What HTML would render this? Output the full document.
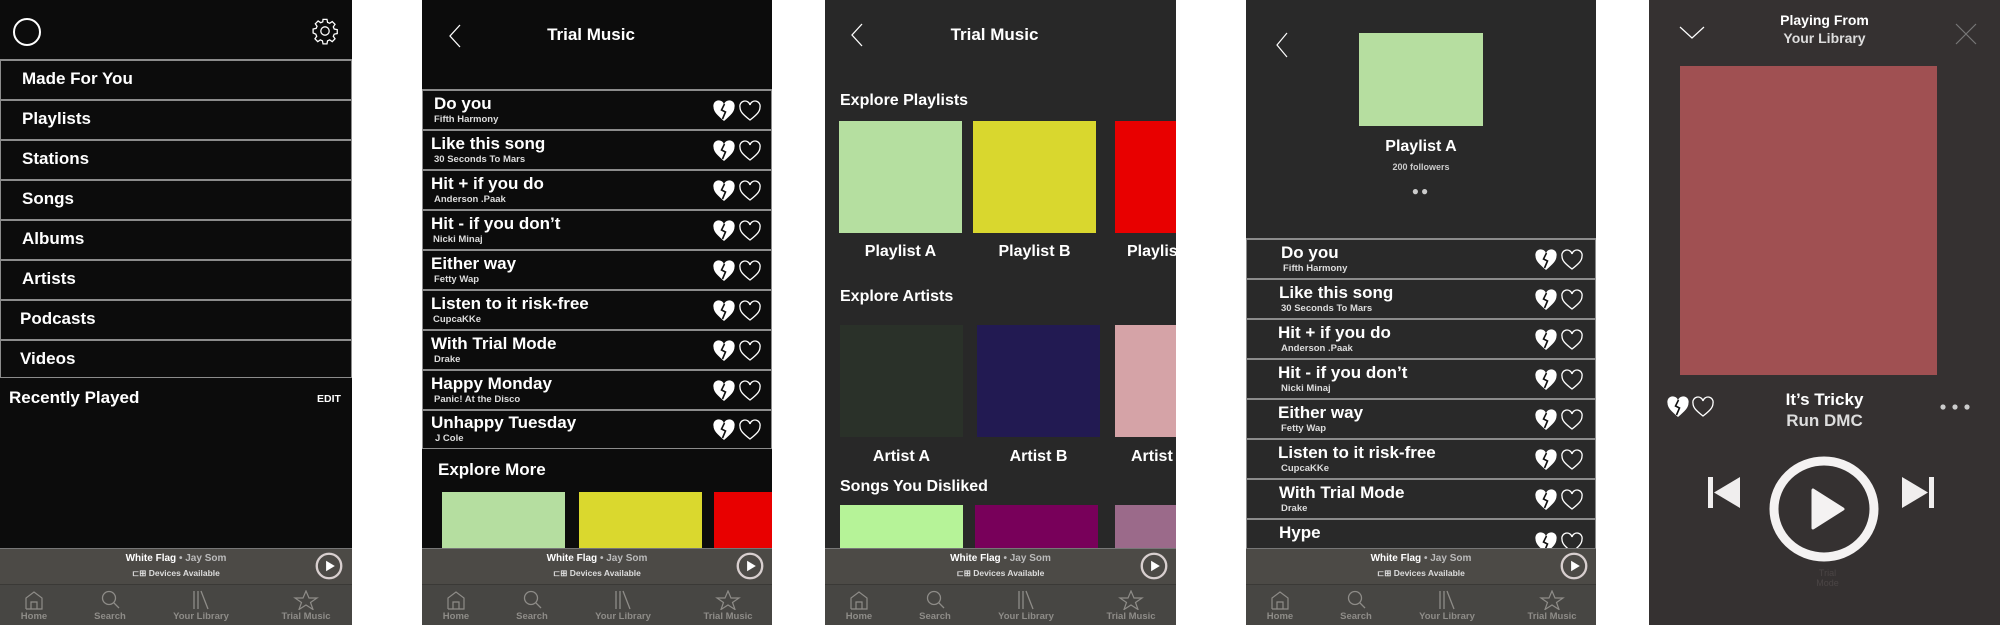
<!DOCTYPE html>
<html><head><meta charset="utf-8">
<style>
*{margin:0;padding:0;box-sizing:border-box}
body{width:2000px;height:625px;background:#fff;position:relative;overflow:hidden;font-family:"Liberation Sans",sans-serif;color:#fff}
.scr{position:absolute;top:0;height:625px;overflow:hidden}
.a{position:absolute}
.b{font-weight:bold}
.row{position:absolute;left:0;right:0;height:40px;border:1px solid #8c8c8c;border-top:2px solid #8c8c8c;border-bottom:none}
.row .t{position:absolute;top:3px;font-size:17px;font-weight:bold;white-space:nowrap}
.row .s{position:absolute;top:23px;font-size:9.5px;font-weight:bold;color:#ddd;white-space:nowrap}
.row .h{position:absolute;top:9px}
.mini{position:absolute;left:0;right:0;top:548px;height:36px;background:#4c4a46;border-top:1px solid #777}
.mini .l1{position:absolute;top:4px;left:0;right:0;text-align:center;font-size:10px;font-weight:bold}
.mini .l1 span{color:#bbb}
.mini .l2{position:absolute;top:19px;left:0;right:0;text-align:center;font-size:8.5px;font-weight:bold;color:#ddd}
.tabs{position:absolute;left:0;right:0;top:584px;height:41px;background:#474643;border-top:1px solid #3a3936}
.tab{position:absolute;top:0;width:90px;margin-left:-45px;text-align:center;color:#8e8c88;font-size:9.5px;font-weight:bold}
.tab svg{display:block;margin:5px auto 1px}
.sec{position:absolute;font-size:16px;font-weight:bold;white-space:nowrap}
.lbl{position:absolute;font-size:16px;font-weight:bold;text-align:center;white-space:nowrap}
</style></head><body>
<svg width="0" height="0" style="position:absolute">
<defs>
<symbol id="bh" viewBox="0 0 24 22"><path d="M12 21C5 15 1.5 11.5 1.5 7A5.2 5.2 0 0 1 12 4.5A5.2 5.2 0 0 1 22.5 7C22.5 11.5 19 15 12 21Z" fill="#fff"/><path d="M12.5 4L9.5 10L13.5 12L10.5 19" fill="none" stroke="#111" stroke-width="1.6"/></symbol>
<symbol id="oh" viewBox="0 0 24 22"><path d="M12 20C5 14.5 2 11.5 2 7.2A4.8 4.8 0 0 1 12 5A4.8 4.8 0 0 1 22 7.2C22 11.5 19 14.5 12 20Z" fill="none" stroke="#fff" stroke-width="1.3"/></symbol>
<symbol id="pl" viewBox="0 0 24 24"><circle cx="12" cy="12" r="10.5" fill="none" stroke="#d8cfcf" stroke-width="2"/><path d="M9.5 7.5L17 12L9.5 16.5Z" fill="#fff"/></symbol>
</defs></svg>

<!-- ===== SCREEN 1 ===== -->
<div class="scr" style="left:0;width:352px;background:#0c0c0c">
 <svg class="a" style="left:12px;top:17px" width="30" height="30"><circle cx="15" cy="15" r="13" fill="none" stroke="#fff" stroke-width="2"/></svg>
 <svg class="a" style="left:311px;top:17px" width="28" height="28" viewBox="0 0 24 24"><path d="M10.3 2h3.4l.5 2.6 1.8.8 2.2-1.5 2.4 2.4-1.5 2.2.8 1.8 2.6.5v3.4l-2.6.5-.8 1.8 1.5 2.2-2.4 2.4-2.2-1.5-1.8.8-.5 2.6h-3.4l-.5-2.6-1.8-.8-2.2 1.5-2.4-2.4 1.5-2.2-.8-1.8L1.8 13.7v-3.4l2.6-.5.8-1.8-1.5-2.2 2.4-2.4 2.2 1.5 1.8-.8z" fill="none" stroke="#fff" stroke-width="1.1"/><circle cx="12" cy="12" r="3.6" fill="none" stroke="#fff" stroke-width="1.1"/></svg>
 <div class="row" style="top:59px"><div class="t" style="left:21px;top:8px">Made For You</div></div>
 <div class="row" style="top:99px"><div class="t" style="left:21px;top:8px">Playlists</div></div>
 <div class="row" style="top:139px"><div class="t" style="left:21px;top:8px">Stations</div></div>
 <div class="row" style="top:179px"><div class="t" style="left:21px;top:8px">Songs</div></div>
 <div class="row" style="top:219px"><div class="t" style="left:21px;top:8px">Albums</div></div>
 <div class="row" style="top:259px"><div class="t" style="left:21px;top:8px">Artists</div></div>
 <div class="row" style="top:299px"><div class="t" style="left:19px;top:8px">Podcasts</div></div>
 <div class="row" style="top:339px;height:39px;border-bottom:1px solid #8c8c8c"><div class="t" style="left:19px;top:8px">Videos</div></div>
 <div class="a b" style="left:9px;top:388px;font-size:17px">Recently Played</div>
 <div class="a b" style="left:317px;top:393px;font-size:10.5px">EDIT</div>
 <div class="mini"><div class="l1">White Flag <span>• Jay Som</span></div><div class="l2">⊏⊞ Devices Available</div><svg class="a" style="left:315px;top:3px" width="28" height="28"><use href="#pl"/></svg></div>
 <div class="tabs">
  <div class="tab" style="left:34px"><svg width="22" height="20" viewBox="0 0 22 20"><path d="M3 19V8L11 2L19 8V19H3M8 19V12H14V19" fill="none" stroke="#8e8c88" stroke-width="1.2"/></svg>Home</div>
  <div class="tab" style="left:110px"><svg width="22" height="20" viewBox="0 0 22 20"><circle cx="10" cy="8" r="6.5" fill="none" stroke="#8e8c88" stroke-width="1.3"/><path d="M14.6 12.6L20 18" stroke="#8e8c88" stroke-width="1.3"/></svg>Search</div>
  <div class="tab" style="left:201px"><svg width="22" height="20" viewBox="0 0 22 20"><path d="M4 1V19M8 1V19M11 1L18 19" stroke="#8e8c88" stroke-width="1.3"/></svg>Your Library</div>
  <div class="tab" style="left:306px"><svg width="26" height="20" viewBox="0 0 26 20"><path d="M13 1L16 8H24L17.5 12.5L20 19.5L13 15L6 19.5L8.5 12.5L2 8H10Z" fill="none" stroke="#8e8c88" stroke-width="1.2"/></svg>Trial Music</div>
 </div>
</div>

<!-- ===== SCREEN 2 ===== -->
<div class="scr" style="left:422px;width:350px;background:#0c0c0c">
 <svg class="a" style="left:26px;top:24px" width="14" height="24"><path d="M12 1L2 12L12 23" fill="none" stroke="#fff" stroke-width="1.3"/></svg>
 <div class="a b" style="left:0;width:350px;text-align:center;top:25px;font-size:17px;padding-right:12px">Trial Music</div>
 <div class="row" style="top:89px"><div class="t" style="left:11px">Do you</div><div class="s" style="left:11px">Fifth Harmony</div><svg class="h" style="left:289px" width="24" height="22"><use href="#bh"/></svg><svg class="h" style="left:315px" width="24" height="22"><use href="#oh"/></svg></div>
 <div class="row" style="top:129px"><div class="t" style="left:8px">Like this song</div><div class="s" style="left:11px">30 Seconds To Mars</div><svg class="h" style="left:289px" width="24" height="22"><use href="#bh"/></svg><svg class="h" style="left:315px" width="24" height="22"><use href="#oh"/></svg></div>
 <div class="row" style="top:169px"><div class="t" style="left:8px">Hit + if you do</div><div class="s" style="left:11px">Anderson .Paak</div><svg class="h" style="left:289px" width="24" height="22"><use href="#bh"/></svg><svg class="h" style="left:315px" width="24" height="22"><use href="#oh"/></svg></div>
 <div class="row" style="top:209px"><div class="t" style="left:8px">Hit - if you don’t</div><div class="s" style="left:10px">Nicki Minaj</div><svg class="h" style="left:289px" width="24" height="22"><use href="#bh"/></svg><svg class="h" style="left:315px" width="24" height="22"><use href="#oh"/></svg></div>
 <div class="row" style="top:249px"><div class="t" style="left:8px">Either way</div><div class="s" style="left:11px">Fetty Wap</div><svg class="h" style="left:289px" width="24" height="22"><use href="#bh"/></svg><svg class="h" style="left:315px" width="24" height="22"><use href="#oh"/></svg></div>
 <div class="row" style="top:289px"><div class="t" style="left:8px">Listen to it risk-free</div><div class="s" style="left:10px">CupcaKKe</div><svg class="h" style="left:289px" width="24" height="22"><use href="#bh"/></svg><svg class="h" style="left:315px" width="24" height="22"><use href="#oh"/></svg></div>
 <div class="row" style="top:329px"><div class="t" style="left:8px">With Trial Mode</div><div class="s" style="left:11px">Drake</div><svg class="h" style="left:289px" width="24" height="22"><use href="#bh"/></svg><svg class="h" style="left:315px" width="24" height="22"><use href="#oh"/></svg></div>
 <div class="row" style="top:369px"><div class="t" style="left:8px">Happy Monday</div><div class="s" style="left:11px">Panic! At the Disco</div><svg class="h" style="left:289px" width="24" height="22"><use href="#bh"/></svg><svg class="h" style="left:315px" width="24" height="22"><use href="#oh"/></svg></div>
 <div class="row" style="top:409px;height:40px;border-bottom:1px solid #8c8c8c"><div class="t" style="left:8px;top:2px">Unhappy Tuesday</div><div class="s" style="left:12px;top:22px">J Cole</div><svg class="h" style="left:289px;top:8px" width="24" height="22"><use href="#bh"/></svg><svg class="h" style="left:315px;top:8px" width="24" height="22"><use href="#oh"/></svg></div>
 <div class="sec" style="left:16px;top:460px;font-size:17px">Explore More</div>
 <div class="a" style="left:20px;top:492px;width:123px;height:57px;background:#b5dea0"></div>
 <div class="a" style="left:157px;top:492px;width:123px;height:57px;background:#dad82e"></div>
 <div class="a" style="left:292px;top:492px;width:60px;height:57px;background:#e80000"></div>
 <div class="mini"><div class="l1">White Flag <span>• Jay Som</span></div><div class="l2">⊏⊞ Devices Available</div><svg class="a" style="left:314px;top:3px" width="28" height="28"><use href="#pl"/></svg></div>
 <div class="tabs">
  <div class="tab" style="left:34px"><svg width="22" height="20" viewBox="0 0 22 20"><path d="M3 19V8L11 2L19 8V19H3M8 19V12H14V19" fill="none" stroke="#8e8c88" stroke-width="1.2"/></svg>Home</div>
  <div class="tab" style="left:110px"><svg width="22" height="20" viewBox="0 0 22 20"><circle cx="10" cy="8" r="6.5" fill="none" stroke="#8e8c88" stroke-width="1.3"/><path d="M14.6 12.6L20 18" stroke="#8e8c88" stroke-width="1.3"/></svg>Search</div>
  <div class="tab" style="left:201px"><svg width="22" height="20" viewBox="0 0 22 20"><path d="M4 1V19M8 1V19M11 1L18 19" stroke="#8e8c88" stroke-width="1.3"/></svg>Your Library</div>
  <div class="tab" style="left:306px"><svg width="26" height="20" viewBox="0 0 26 20"><path d="M13 1L16 8H24L17.5 12.5L20 19.5L13 15L6 19.5L8.5 12.5L2 8H10Z" fill="none" stroke="#8e8c88" stroke-width="1.2"/></svg>Trial Music</div>
 </div>
</div>

<!-- ===== SCREEN 3 ===== -->
<div class="scr" style="left:825px;width:351px;background:#282828">
 <svg class="a" style="left:25px;top:23px" width="14" height="24"><path d="M12 1L2 12L12 23" fill="none" stroke="#fff" stroke-width="1.3"/></svg>
 <div class="a b" style="left:0;width:351px;text-align:center;top:25px;font-size:17px;padding-right:12px">Trial Music</div>
 <div class="sec" style="left:15px;top:92px">Explore Playlists</div>
 <div class="a" style="left:14px;top:121px;width:123px;height:112px;background:#b5dfa0"></div>
 <div class="a" style="left:148px;top:121px;width:123px;height:112px;background:#d9d72e"></div>
 <div class="a" style="left:290px;top:121px;width:61px;height:112px;background:#e80000"></div>
 <div class="lbl" style="left:14px;width:123px;top:243px">Playlist A</div>
 <div class="lbl" style="left:148px;width:123px;top:243px">Playlist B</div>
 <div class="lbl" style="left:302px;top:243px">Playlist C</div>
 <div class="sec" style="left:15px;top:288px">Explore Artists</div>
 <div class="a" style="left:15px;top:325px;width:123px;height:112px;background:#2a3129"></div>
 <div class="a" style="left:152px;top:325px;width:123px;height:112px;background:#221a52"></div>
 <div class="a" style="left:290px;top:325px;width:61px;height:112px;background:#d5a3a7"></div>
 <div class="lbl" style="left:15px;width:123px;top:448px">Artist A</div>
 <div class="lbl" style="left:152px;width:123px;top:448px">Artist B</div>
 <div class="lbl" style="left:306px;top:448px">Artist C</div>
 <div class="sec" style="left:15px;top:478px">Songs You Disliked</div>
 <div class="a" style="left:15px;top:505px;width:123px;height:44px;background:#b6f398"></div>
 <div class="a" style="left:150px;top:505px;width:123px;height:44px;background:#78005a"></div>
 <div class="a" style="left:290px;top:505px;width:61px;height:44px;background:#9b6a8a"></div>
 <div class="mini"><div class="l1">White Flag <span>• Jay Som</span></div><div class="l2">⊏⊞ Devices Available</div><svg class="a" style="left:315px;top:3px" width="28" height="28"><use href="#pl"/></svg></div>
 <div class="tabs">
  <div class="tab" style="left:34px"><svg width="22" height="20" viewBox="0 0 22 20"><path d="M3 19V8L11 2L19 8V19H3M8 19V12H14V19" fill="none" stroke="#8e8c88" stroke-width="1.2"/></svg>Home</div>
  <div class="tab" style="left:110px"><svg width="22" height="20" viewBox="0 0 22 20"><circle cx="10" cy="8" r="6.5" fill="none" stroke="#8e8c88" stroke-width="1.3"/><path d="M14.6 12.6L20 18" stroke="#8e8c88" stroke-width="1.3"/></svg>Search</div>
  <div class="tab" style="left:201px"><svg width="22" height="20" viewBox="0 0 22 20"><path d="M4 1V19M8 1V19M11 1L18 19" stroke="#8e8c88" stroke-width="1.3"/></svg>Your Library</div>
  <div class="tab" style="left:306px"><svg width="26" height="20" viewBox="0 0 26 20"><path d="M13 1L16 8H24L17.5 12.5L20 19.5L13 15L6 19.5L8.5 12.5L2 8H10Z" fill="none" stroke="#8e8c88" stroke-width="1.2"/></svg>Trial Music</div>
 </div>
</div>

<!-- ===== SCREEN 4 ===== -->
<div class="scr" style="left:1246px;width:350px;background:#292929">
 <svg class="a" style="left:29px;top:32px" width="14" height="26"><path d="M12 1L2 13L12 25" fill="none" stroke="#fff" stroke-width="1.2"/></svg>
 <div class="a" style="left:113px;top:33px;width:124px;height:93px;background:#b6dea0"></div>
 <div class="a b" style="left:0;width:350px;text-align:center;top:138px;font-size:16px">Playlist A</div>
 <div class="a b" style="left:0;width:350px;text-align:center;top:162px;font-size:9px;color:#ccc">200 followers</div>
 <div class="a b" style="left:0;width:350px;text-align:center;top:184px;font-size:12px;color:#ccc;letter-spacing:2px">●●</div>
 <div class="row" style="top:238px"><div class="t" style="left:34px">Do you</div><div class="s" style="left:36px">Fifth Harmony</div><svg class="h" style="left:287px" width="24" height="22"><use href="#bh"/></svg><svg class="h" style="left:313px" width="24" height="22"><use href="#oh"/></svg></div>
 <div class="row" style="top:278px"><div class="t" style="left:32px">Like this song</div><div class="s" style="left:34px">30 Seconds To Mars</div><svg class="h" style="left:287px" width="24" height="22"><use href="#bh"/></svg><svg class="h" style="left:313px" width="24" height="22"><use href="#oh"/></svg></div>
 <div class="row" style="top:318px"><div class="t" style="left:31px">Hit + if you do</div><div class="s" style="left:34px">Anderson .Paak</div><svg class="h" style="left:287px" width="24" height="22"><use href="#bh"/></svg><svg class="h" style="left:313px" width="24" height="22"><use href="#oh"/></svg></div>
 <div class="row" style="top:358px"><div class="t" style="left:31px">Hit - if you don’t</div><div class="s" style="left:34px">Nicki Minaj</div><svg class="h" style="left:287px" width="24" height="22"><use href="#bh"/></svg><svg class="h" style="left:313px" width="24" height="22"><use href="#oh"/></svg></div>
 <div class="row" style="top:398px"><div class="t" style="left:31px">Either way</div><div class="s" style="left:34px">Fetty Wap</div><svg class="h" style="left:287px" width="24" height="22"><use href="#bh"/></svg><svg class="h" style="left:313px" width="24" height="22"><use href="#oh"/></svg></div>
 <div class="row" style="top:438px"><div class="t" style="left:31px">Listen to it risk-free</div><div class="s" style="left:34px">CupcaKKe</div><svg class="h" style="left:287px" width="24" height="22"><use href="#bh"/></svg><svg class="h" style="left:313px" width="24" height="22"><use href="#oh"/></svg></div>
 <div class="row" style="top:478px"><div class="t" style="left:32px">With Trial Mode</div><div class="s" style="left:34px">Drake</div><svg class="h" style="left:287px" width="24" height="22"><use href="#bh"/></svg><svg class="h" style="left:313px" width="24" height="22"><use href="#oh"/></svg></div>
 <div class="row" style="top:518px"><div class="t" style="left:32px">Hype</div><svg class="h" style="left:287px;top:12px" width="24" height="22"><use href="#bh"/></svg><svg class="h" style="left:313px;top:12px" width="24" height="22"><use href="#oh"/></svg></div>
 <div class="mini"><div class="l1">White Flag <span>• Jay Som</span></div><div class="l2">⊏⊞ Devices Available</div><svg class="a" style="left:314px;top:3px" width="28" height="28"><use href="#pl"/></svg></div>
 <div class="tabs">
  <div class="tab" style="left:34px"><svg width="22" height="20" viewBox="0 0 22 20"><path d="M3 19V8L11 2L19 8V19H3M8 19V12H14V19" fill="none" stroke="#8e8c88" stroke-width="1.2"/></svg>Home</div>
  <div class="tab" style="left:110px"><svg width="22" height="20" viewBox="0 0 22 20"><circle cx="10" cy="8" r="6.5" fill="none" stroke="#8e8c88" stroke-width="1.3"/><path d="M14.6 12.6L20 18" stroke="#8e8c88" stroke-width="1.3"/></svg>Search</div>
  <div class="tab" style="left:201px"><svg width="22" height="20" viewBox="0 0 22 20"><path d="M4 1V19M8 1V19M11 1L18 19" stroke="#8e8c88" stroke-width="1.3"/></svg>Your Library</div>
  <div class="tab" style="left:306px"><svg width="26" height="20" viewBox="0 0 26 20"><path d="M13 1L16 8H24L17.5 12.5L20 19.5L13 15L6 19.5L8.5 12.5L2 8H10Z" fill="none" stroke="#8e8c88" stroke-width="1.2"/></svg>Trial Music</div>
 </div>
</div>

<!-- ===== SCREEN 5 ===== -->
<div class="scr" style="left:1649px;width:351px;background:#353131">
 <svg class="a" style="left:30px;top:26px" width="26" height="14"><path d="M1 1L13 12L25 1" fill="none" stroke="#fff" stroke-width="1.2"/></svg>
 <div class="a b" style="left:0;width:351px;text-align:center;top:12px;font-size:14px">Playing From</div>
 <div class="a b" style="left:0;width:351px;text-align:center;top:30px;font-size:14px;color:#ddd">Your Library</div>
 <svg class="a" style="left:305px;top:23px" width="24" height="22"><path d="M2 1L22 21M22 1L2 21" stroke="#777" stroke-width="1.2"/></svg>
 <div class="a" style="left:31px;top:66px;width:257px;height:309px;background:#a05052"></div>
 <svg class="a" style="left:17px;top:396px" width="24" height="22"><use href="#bh"/></svg>
 <svg class="a" style="left:42px;top:396px" width="24" height="22"><use href="#oh"/></svg>
 <div class="a b" style="left:0;width:351px;text-align:center;top:390px;font-size:17px">It’s Tricky</div>
 <div class="a b" style="left:0;width:351px;text-align:center;top:411px;font-size:17px;color:#ddd">Run DMC</div>
 <svg class="a" style="left:289px;top:402px" width="40" height="10"><circle cx="5" cy="5" r="2.6" fill="#ccc"/><circle cx="17" cy="5" r="2.6" fill="#ccc"/><circle cx="29" cy="5" r="2.6" fill="#ccc"/></svg>
 <svg class="a" style="left:58px;top:476px" width="34" height="33"><rect x="1" y="1" width="5" height="31" fill="#f0eeee"/><path d="M33 1V32L7 16.5Z" fill="#f0eeee"/></svg>
 <svg class="a" style="left:120px;top:455px" width="110" height="108"><ellipse cx="55" cy="54" rx="50" ry="48" fill="none" stroke="#f4f2f2" stroke-width="9"/><path d="M44 35V73L74 54Z" fill="#f4f2f2" stroke="#f4f2f2" stroke-width="3" stroke-linejoin="round"/></svg>
 <svg class="a" style="left:252px;top:476px" width="34" height="33"><path d="M1 1V32L27 16.5Z" fill="#f0eeee"/><rect x="28" y="1" width="5" height="31" fill="#f0eeee"/></svg>
 <div class="a" style="left:0;width:351px;text-align:center;top:568px;font-size:9px;line-height:10px;color:#4b4545;padding-left:6px">Trial<br>Mode</div>
</div>
</body></html>
